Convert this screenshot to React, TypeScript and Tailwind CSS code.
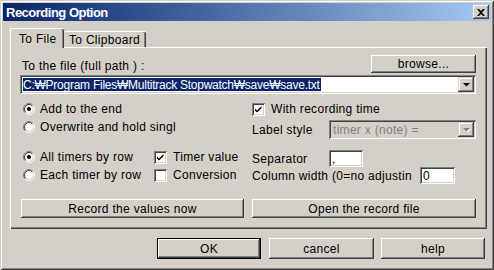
import React from "react";

const FONT = { fontFamily: '"Liberation Sans", Arial, "DejaVu Sans", sans-serif' };

function Radio({ checked }: { checked?: boolean }) {
  return (
    <svg width="12" height="12" viewBox="0 0 12 12" className="shrink-0">
      <circle cx="6" cy="6" r="4.2" fill="#ffffff" />
      <path d="M2.11 9.89 A5.5 5.5 0 0 1 9.89 2.11" fill="none" stroke="#808080" strokeWidth="1" />
      <path d="M9.89 2.11 A5.5 5.5 0 0 1 2.11 9.89" fill="none" stroke="#ffffff" strokeWidth="1" />
      <path d="M2.82 9.18 A4.5 4.5 0 0 1 9.18 2.82" fill="none" stroke="#404040" strokeWidth="1" />
      <path d="M9.18 2.82 A4.5 4.5 0 0 1 2.82 9.18" fill="none" stroke="#d4d0c8" strokeWidth="1" />
      {checked && <circle cx="6" cy="6" r="2" fill="#000000" />}
    </svg>
  );
}

function Check({ checked }: { checked?: boolean }) {
  return (
    <div className="w-[13px] h-[13px] shrink-0 bg-white shadow-[inset_1px_1px_0_#808080,inset_-1px_-1px_0_#ffffff,inset_2px_2px_0_#404040,inset_-2px_-2px_0_#d4d0c8] flex items-center justify-center">
      {checked && (
        <svg width="13" height="13" viewBox="0 0 13 13">
          <path d="M3 5.5 L5 7.5 L9.5 3 L9.5 5 L5 9.5 L3 7.5 Z" fill="#000000" />
        </svg>
      )}
    </div>
  );
}

function Arrow({ disabled }: { disabled?: boolean }) {
  return (
    <div className="w-[16px] h-full shrink-0 bg-[#d4d0c8] shadow-[inset_-1px_-1px_0_#404040,inset_1px_1px_0_#d4d0c8,inset_-2px_-2px_0_#808080,inset_2px_2px_0_#ffffff] flex items-center justify-center">
      <svg width="9" height="6" viewBox="0 0 9 6">
        {disabled && <path d="M2 2 H9 L5.5 5.5 Z" fill="#ffffff" />}
        <path d="M1 1 H8 L4.5 4.5 Z" fill={disabled ? "#808080" : "#000000"} />
      </svg>
    </div>
  );
}

export default function App() {
  return (
    <div
      style={FONT}
      className="w-[494px] h-[270px] bg-[#d4d0c8] p-[3px] flex flex-col text-[12px] tracking-[0.3px] text-black leading-none shadow-[inset_1px_1px_0_#d4d0c8,inset_-1px_-1px_0_#404040,inset_2px_2px_0_#ffffff,inset_-2px_-2px_0_#808080] overflow-hidden"
    >
      {/* Title bar */}
      <div className="h-[18px] flex items-center justify-between pl-[3px] pr-[2px] bg-gradient-to-r from-[#0a246a] to-[#a6caf0]">
        <span className="text-white font-bold text-[13px] tracking-[-0.5px]">Recording Option</span>
        <div className="w-[16px] h-[14px] bg-[#d4d0c8] shadow-[inset_-1px_-1px_0_#404040,inset_1px_1px_0_#ffffff,inset_-2px_-2px_0_#808080] flex items-center justify-center">
          <svg width="8" height="7" viewBox="0 0 8 7">
            <path d="M0 0 H2 L4 2 L6 0 H8 L5 3.5 L8 7 H6 L4 5 L2 7 H0 L3 3.5 Z" fill="#000000" />
          </svg>
        </div>
      </div>

      {/* Tabs */}
      <div className="mt-[7px] ml-[7px] flex items-end h-[19px] relative z-10">
        <div className="w-[54px] h-[20px] -mb-px bg-[#d4d0c8] rounded-t-[2px] border-l border-t border-white shadow-[inset_-1px_0_0_#404040,inset_-2px_0_0_#808080] flex items-start pt-[4px] pl-[8px]">
          <span>To File</span>
        </div>
        <div className="w-[82px] h-[16px] bg-[#d4d0c8] rounded-t-[2px] border-t border-white shadow-[inset_-1px_0_0_#404040,inset_-2px_0_0_#808080] flex items-start pt-[2px] pl-[5px]">
          <span>To Clipboard</span>
        </div>
      </div>

      {/* Panel */}
      <div className="ml-[7px] w-[477px] h-[182px] bg-[#d4d0c8] shadow-[inset_1px_1px_0_#ffffff,inset_-1px_-1px_0_#404040,inset_-2px_-2px_0_#808080] pt-[8px] pl-[10px] pr-[11px] flex flex-col">
        <div className="flex items-center justify-between h-[18px]">
          <span className="ml-[2px] mt-[4px]">To the file (full path ) :</span>
          <div className="w-[105px] h-[18px] bg-[#d4d0c8] shadow-[inset_-1px_-1px_0_#404040,inset_1px_1px_0_#ffffff,inset_-2px_-2px_0_#808080] flex items-center justify-center">
            browse...
          </div>
        </div>
        <div className="mt-[2px] h-[19px] bg-white shadow-[inset_1px_1px_0_#808080,inset_-1px_-1px_0_#ffffff,inset_2px_2px_0_#404040,inset_-2px_-2px_0_#d4d0c8] p-[2px] flex items-stretch">
          <div className="flex-1 flex items-center pl-[1px]">
            <span className="bg-[#0a246a] text-white h-[13px] flex items-center pr-[1px] tracking-[-0.25px]">
              C:₩Program Files₩Multitrack Stopwatch₩save₩save.txt
            </span>
          </div>
          <Arrow />
        </div>

        <div className="mt-[6px] flex">
          {/* Left column */}
          <div className="w-[232px] flex flex-col pl-[3px]">
            <div className="h-[18px] flex items-center gap-[5px]">
              <Radio checked />
              <span>Add to the end</span>
            </div>
            <div className="h-[18px] flex items-center gap-[5px]">
              <Radio />
              <span>Overwrite and hold singl</span>
            </div>
            <div className="h-[18px] mt-[12px] flex items-center">
              <div className="w-[131px] flex items-center gap-[5px]">
                <Radio checked />
                <span>All timers by row</span>
              </div>
              <div className="flex items-center gap-[6px]">
                <Check checked />
                <span>Timer value</span>
              </div>
            </div>
            <div className="h-[18px] flex items-center">
              <div className="w-[131px] flex items-center gap-[5px]">
                <Radio />
                <span>Each timer by row</span>
              </div>
              <div className="flex items-center gap-[6px]">
                <Check />
                <span>Conversion</span>
              </div>
            </div>
          </div>

          {/* Right column */}
          <div className="flex-1 flex flex-col">
            <div className="h-[18px] flex items-center gap-[6px]">
              <Check checked />
              <span>With recording time</span>
            </div>
            <div className="mt-[2px] h-[19px] flex items-center">
              <span className="w-[77px]">Label style</span>
              <div className="flex-1 h-[19px] bg-[#d4d0c8] shadow-[inset_1px_1px_0_#808080,inset_-1px_-1px_0_#ffffff,inset_2px_2px_0_#404040,inset_-2px_-2px_0_#d4d0c8] p-[2px] flex items-stretch">
                <div className="flex-1 flex items-center pl-[2px] text-[#808080]">timer x (note) =</div>
                <Arrow disabled />
              </div>
            </div>
            <div className="mt-[11px] h-[17px] flex items-center">
              <span className="w-[77px]">Separator</span>
              <div className="w-[34px] h-[17px] bg-white shadow-[inset_1px_1px_0_#808080,inset_-1px_-1px_0_#ffffff,inset_2px_2px_0_#404040,inset_-2px_-2px_0_#d4d0c8] flex items-center pl-[3px]">
                ,
              </div>
            </div>
            <div className="h-[17px] flex items-center">
              <span className="w-[168px]">Column width (0=no adjustin</span>
              <div className="w-[35px] h-[17px] bg-white shadow-[inset_1px_1px_0_#808080,inset_-1px_-1px_0_#ffffff,inset_2px_2px_0_#404040,inset_-2px_-2px_0_#d4d0c8] flex items-center pl-[3px]">
                0
              </div>
            </div>
          </div>
        </div>

        <div className="mt-[15px] flex">
          <div className="ml-[1px] w-[223px] h-[19px] bg-[#d4d0c8] shadow-[inset_-1px_-1px_0_#404040,inset_1px_1px_0_#ffffff,inset_-2px_-2px_0_#808080] flex items-center justify-center">
            Record the values now
          </div>
          <div className="ml-[8px] w-[224px] h-[19px] bg-[#d4d0c8] shadow-[inset_-1px_-1px_0_#404040,inset_1px_1px_0_#ffffff,inset_-2px_-2px_0_#808080] flex items-center justify-center">
            Open the record file
          </div>
        </div>
      </div>

      {/* Bottom buttons */}
      <div className="mt-[9px] ml-[154px] flex">
        <div className="w-[104px] h-[21px] border border-black bg-[#d4d0c8] shadow-[inset_-1px_-1px_0_#404040,inset_1px_1px_0_#ffffff,inset_-2px_-2px_0_#808080] flex items-center justify-center">
          OK
        </div>
        <div className="ml-[8px] w-[105px] h-[21px] bg-[#d4d0c8] shadow-[inset_-1px_-1px_0_#404040,inset_1px_1px_0_#ffffff,inset_-2px_-2px_0_#808080] flex items-center justify-center">
          cancel
        </div>
        <div className="ml-[7px] w-[104px] h-[21px] bg-[#d4d0c8] shadow-[inset_-1px_-1px_0_#404040,inset_1px_1px_0_#ffffff,inset_-2px_-2px_0_#808080] flex items-center justify-center">
          help
        </div>
      </div>
    </div>
  );
}
